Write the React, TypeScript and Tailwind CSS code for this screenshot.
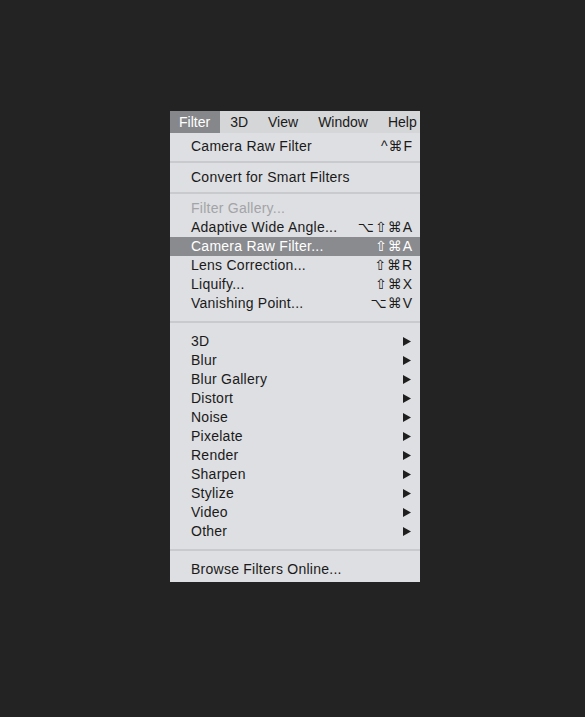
const topItems = ['Filter', '3D', 'View', 'Window', 'Help'];

type Row =
  | { kind: 'item'; label: string; shortcut?: string; disabled?: boolean; active?: boolean; submenu?: boolean }
  | { kind: 'sep'; size: 'sm' | 'lg' };

const rows: Row[] = [
  { kind: 'item', label: 'Camera Raw Filter', shortcut: '^⌘F' },
  { kind: 'sep', size: 'sm' },
  { kind: 'item', label: 'Convert for Smart Filters' },
  { kind: 'sep', size: 'sm' },
  { kind: 'item', label: 'Filter Gallery...', disabled: true },
  { kind: 'item', label: 'Adaptive Wide Angle...', shortcut: '⌥⇧⌘A' },
  { kind: 'item', label: 'Camera Raw Filter...', shortcut: '⇧⌘A', active: true },
  { kind: 'item', label: 'Lens Correction...', shortcut: '⇧⌘R' },
  { kind: 'item', label: 'Liquify...', shortcut: '⇧⌘X' },
  { kind: 'item', label: 'Vanishing Point...', shortcut: '⌥⌘V' },
  { kind: 'sep', size: 'lg' },
  ...['3D', 'Blur', 'Blur Gallery', 'Distort', 'Noise', 'Pixelate', 'Render', 'Sharpen', 'Stylize', 'Video', 'Other'].map(
    (label): Row => ({ kind: 'item', label, submenu: true })
  ),
  { kind: 'sep', size: 'lg' },
  { kind: 'item', label: 'Browse Filters Online...' },
];

function Arrow() {
  return (
    <svg width="8" height="9" viewBox="0 0 8 9" className="block">
      <path d="M0 0 L8 4.5 L0 9 Z" fill="#1f1f1f" />
    </svg>
  );
}

export default function App() {
  return (
    <div
      className="min-h-[717px] w-full bg-[#232323] pt-[111px] pl-[170px]"
      style={{ fontFamily: '"Liberation Sans", "DejaVu Sans", sans-serif' }}
    >
      <div className="w-[250px] overflow-hidden">
        {/* menu bar */}
        <div className="flex h-[22px] items-stretch bg-[#d5d6d8] text-[14px] text-[#1a1a1a]">
          {topItems.map((t, i) => (
            <div
              key={t}
              className={
                i === 0
                  ? 'flex items-center bg-[#86878a] pl-[9px] pr-[10px] text-white'
                  : 'flex items-center px-[10px]'
              }
            >
              {t}
            </div>
          ))}
        </div>

        {/* dropdown */}
        <div className="bg-[#dedfe2] pt-[4px] pb-[3px] text-[14px] text-[#1a1a1a]">
          {rows.map((r, i) => {
            if (r.kind === 'sep') {
              return r.size === 'sm' ? (
                <div key={i} className="flex h-[12px] items-center">
                  <div className="h-[2px] w-full bg-[#c8cacd]" />
                </div>
              ) : (
                <div key={i} className="h-[19px] pt-[8px]">
                  <div className="h-[2px] w-full bg-[#c8cacd]" />
                </div>
              );
            }
            return (
              <div
                key={i}
                className={
                  'flex h-[19px] items-center justify-between pl-[21px] leading-[19px] ' +
                  (r.active ? 'bg-[#8a8b8f] text-white ' : '') +
                  (r.disabled ? 'text-[#a3a4a7] ' : '') +
                  (r.submenu ? 'pr-[9px]' : 'pr-[7px]')
                }
              >
                <span className="tracking-[0.25px]">{r.label}</span>
                {r.shortcut && <span className="tracking-[1px]">{r.shortcut}</span>}
                {r.submenu && <Arrow />}
              </div>
            );
          })}
        </div>
      </div>
    </div>
  );
}
